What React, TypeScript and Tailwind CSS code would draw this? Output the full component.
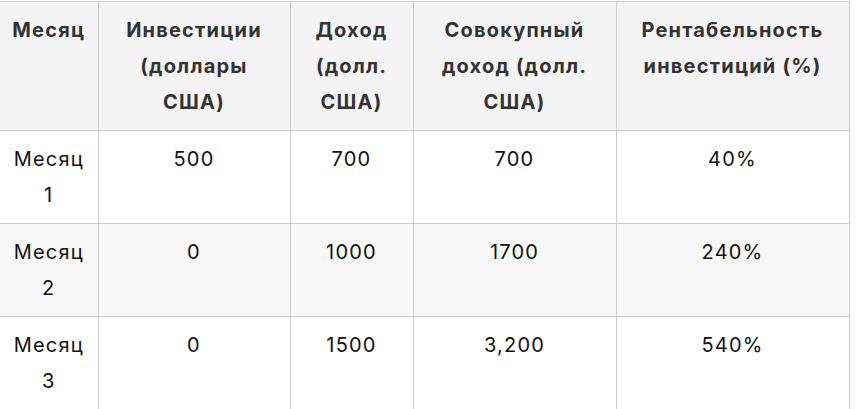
import React from "react";

const headers = [
  ["Месяц"],
  ["Инвестиции", "(доллары", "США)"],
  ["Доход", "(долл.", "США)"],
  ["Совокупный", "доход (долл.", "США)"],
  ["Рентабельность", "инвестиций (%)"],
];

const rows = [
  ["1", "500", "700", "700", "40%"],
  ["2", "0", "1000", "1700", "240%"],
  ["3", "0", "1500", "3,200", "540%"],
];

const widths = ["w-[98px]", "w-[192px]", "w-[123px]", "w-[203px]", "w-[233px]"];

const App = () => {
  return (
    <div
      className="w-[856px] h-[409px] bg-white overflow-hidden pt-px"
      style={{ fontFamily: "Inter, 'Noto Sans', sans-serif" }}
    >
      <table className="w-[849px] table-fixed border-collapse text-[20px] leading-[36px] tracking-[1.2px]">
        <thead>
          <tr className="bg-[#f4f4f4]">
            {headers.map((lines, i) => (
              <th
                key={i}
                className={`${widths[i]} border border-[#cccccc] border-l-0 px-1 py-[10px] align-top text-center font-bold text-[#333333]`}
              >
                {lines.map((l, j) => (
                  <div key={j}>{l}</div>
                ))}
              </th>
            ))}
          </tr>
        </thead>
        <tbody>
          {rows.map((r, i) => (
            <tr key={i} className={i === 1 ? "bg-[#f8f8f8]" : "bg-white"}>
              {r.map((c, j) => (
                <td
                  key={j}
                  className="border border-[#cccccc] border-l-0 px-1 py-[10px] align-top text-center text-[#111111] h-[93px]"
                >
                  {j === 0 ? (
                    <>
                      <div>Месяц</div>
                      <div>{c}</div>
                    </>
                  ) : (
                    c
                  )}
                </td>
              ))}
            </tr>
          ))}
        </tbody>
      </table>
    </div>
  );
};

export default App;
